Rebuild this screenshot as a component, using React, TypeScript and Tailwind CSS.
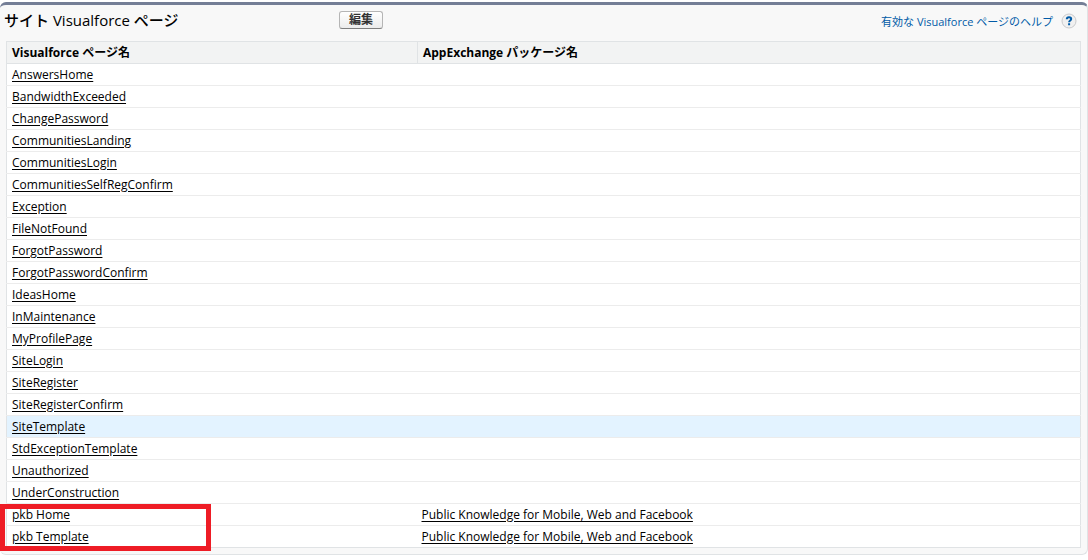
type SitePage = {
  name: string;
  appPackage?: string;
  highlighted?: boolean;
};

const KNOWLEDGE_PACKAGE = "Public Knowledge for Mobile, Web and Facebook";

const pages: SitePage[] = [
  { name: "AnswersHome" },
  { name: "BandwidthExceeded" },
  { name: "ChangePassword" },
  { name: "CommunitiesLanding" },
  { name: "CommunitiesLogin" },
  { name: "CommunitiesSelfRegConfirm" },
  { name: "Exception" },
  { name: "FileNotFound" },
  { name: "ForgotPassword" },
  { name: "ForgotPasswordConfirm" },
  { name: "IdeasHome" },
  { name: "InMaintenance" },
  { name: "MyProfilePage" },
  { name: "SiteLogin" },
  { name: "SiteRegister" },
  { name: "SiteRegisterConfirm" },
  { name: "SiteTemplate", highlighted: true },
  { name: "StdExceptionTemplate" },
  { name: "Unauthorized" },
  { name: "UnderConstruction" },
  { name: "pkb Home", appPackage: KNOWLEDGE_PACKAGE },
  { name: "pkb Template", appPackage: KNOWLEDGE_PACKAGE },
];

function HelpIcon() {
  return (
    <svg width="16" height="16" viewBox="0 0 16 16" aria-hidden="true">
      <circle cx="8" cy="8" r="7" fill="#f0f0f0" stroke="#c9cacc" />
      <path
        d="M5.8 6.3c0-1.3.9-2 2.2-2s2.2.7 2.2 1.8c0 1.4-2.1 1.4-2.1 3.1M8.1 10.3v1.9"
        fill="none"
        stroke="#015ba7"
        strokeWidth="2"
      />
    </svg>
  );
}

function PageRow({ page }: { page: SitePage }) {
  return (
    <tr
      className={
        page.highlighted
          ? "border-b border-[#ececec] bg-[#e3f3ff]"
          : "border-b border-[#ececec] bg-white last:border-b-0"
      }
    >
      <td className="h-[22px] px-[5px] py-0">
        <a href="#" className="underline underline-offset-2">
          {page.name}
        </a>
      </td>
      <td className="h-[22px] px-1 py-0">
        {page.appPackage && (
          <a href="#" className="underline underline-offset-2">
            {page.appPackage}
          </a>
        )}
      </td>
    </tr>
  );
}

export default function App() {
  return (
    <div className="bg-white pt-[2px] font-['Open_Sans','Noto_Sans_CJK_JP',sans-serif] text-xs leading-4 text-black">
      <section className="relative rounded-md border-t-[3px] border-r border-b border-t-[#747e96] border-r-[#e0e3e5] border-b-[#e0e3e5] bg-[#f8f8f8] pb-[6px]">
        {/* Title bar */}
        <div className="flex h-9 items-start pr-[10px] pl-1">
          <h2 className="w-[335px] shrink-0 pt-[3px] text-[15px] leading-6 font-medium">
            サイト Visualforce ページ
          </h2>
          <button
            type="button"
            className="mt-[6px] h-[18px] w-11 rounded-[3px] border border-[#b5b5b5] border-b-[#7f7f7f] bg-linear-to-b from-white to-[#ececec] text-xs leading-4 font-bold text-[#333]"
          >
            編集
          </button>
          <a
            href="#"
            className="mt-[7px] ml-auto flex items-center gap-2 text-[11px] text-[#015ba7]"
          >
            <span className="pt-[2px]">有効な Visualforce ページのヘルプ</span>
            <HelpIcon />
          </a>
        </div>

        <div className="px-[6px]">
          <table className="w-full table-fixed border-collapse border border-[#e0e3e5]">
            <colgroup>
              <col className="w-[411px]" />
              <col />
            </colgroup>
            <thead>
              <tr className="border-b border-[#e0e3e5] bg-[#f2f3f3] text-left">
                <th scope="col" className="h-[22px] border-r border-[#e0e3e5] px-[5px] py-0">
                  Visualforce ページ名
                </th>
                <th scope="col" className="h-[22px] px-[5px] py-0">
                  AppExchange パッケージ名
                </th>
              </tr>
            </thead>
            <tbody>
              {pages.map((page) => (
                <PageRow key={page.name} page={page} />
              ))}
            </tbody>
          </table>
        </div>

        {/* Marker around the pkb pages */}
        <div className="pointer-events-none absolute bottom-[3px] left-0 h-[47px] w-[211px] border-[5px] border-[#ee1c25]" />
      </section>
    </div>
  );
}
